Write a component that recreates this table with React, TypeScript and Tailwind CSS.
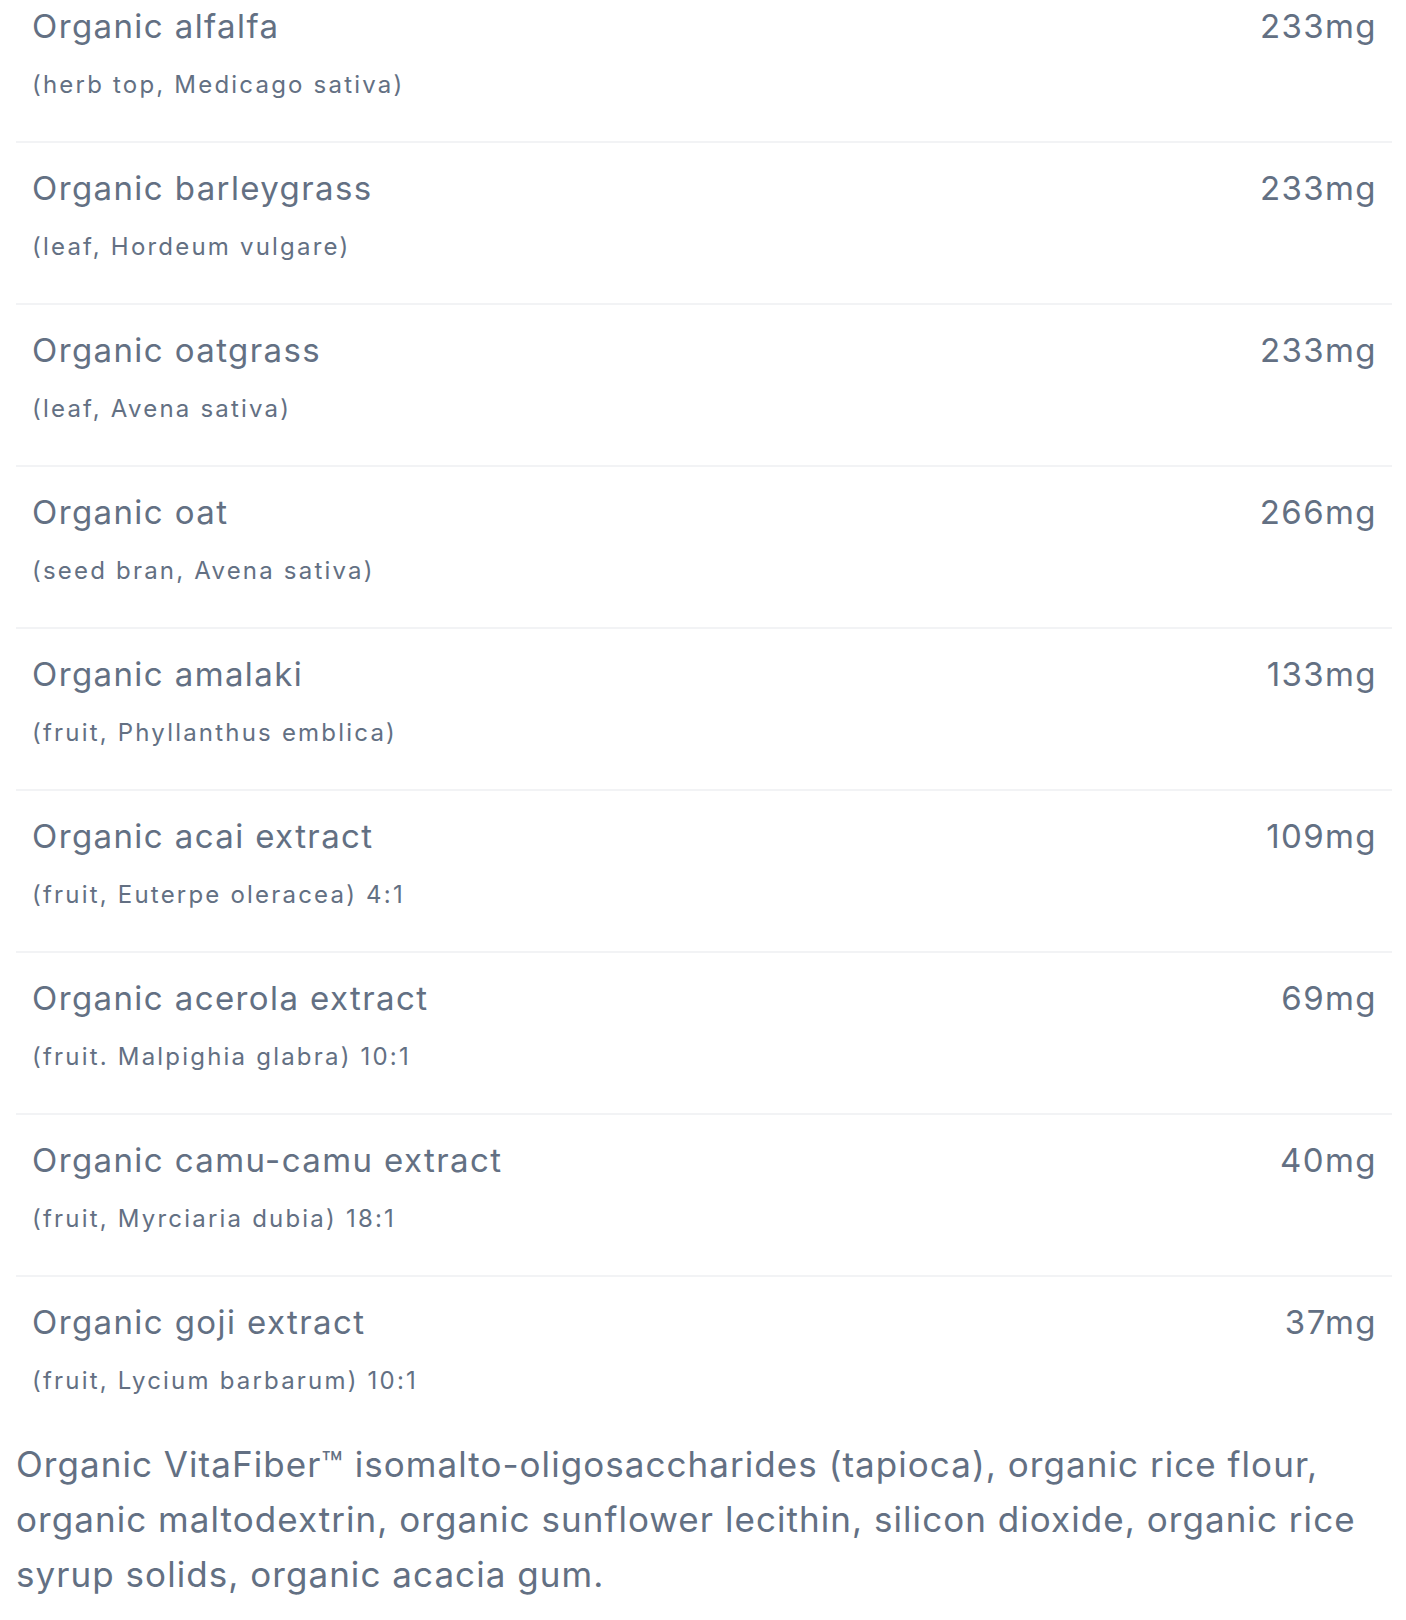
const INGREDIENTS = [
  { name: "Organic alfalfa", detail: "(herb top, Medicago sativa)", amount: "233mg" },
  { name: "Organic barleygrass", detail: "(leaf, Hordeum vulgare)", amount: "233mg" },
  { name: "Organic oatgrass", detail: "(leaf, Avena sativa)", amount: "233mg" },
  { name: "Organic oat", detail: "(seed bran, Avena sativa)", amount: "266mg" },
  { name: "Organic amalaki", detail: "(fruit, Phyllanthus emblica)", amount: "133mg" },
  { name: "Organic acai extract", detail: "(fruit, Euterpe oleracea) 4:1", amount: "109mg" },
  { name: "Organic acerola extract", detail: "(fruit. Malpighia glabra) 10:1", amount: "69mg" },
  { name: "Organic camu-camu extract", detail: "(fruit, Myrciaria dubia) 18:1", amount: "40mg" },
  { name: "Organic goji extract", detail: "(fruit, Lycium barbarum) 10:1", amount: "37mg" },
];

export default function App() {
  return (
    <div className="min-h-screen bg-white pl-4 pr-[14px] font-['Inter',sans-serif] text-[#637083]">
      <ul>
        {INGREDIENTS.map((item, i) => (
          <li
            key={item.name}
            className={
              "flex items-start justify-between px-4 pb-[38px] " +
              (i === 0 ? "pt-[4px] " : "pt-[23px] ") +
              (i < INGREDIENTS.length - 1 ? "border-b-2 border-[#f2f3f5]" : "")
            }
          >
            <div>
              <div className="text-[33px] leading-[44px] tracking-[1.4px]">{item.name}</div>
              <div className="mt-[19px] text-[24px] leading-[36px] tracking-[2.2px]">{item.detail}</div>
            </div>
            <div className="-mr-[1px] text-[33px] leading-[44px] tracking-[1.4px]">{item.amount}</div>
          </li>
        ))}
      </ul>
      <p className="text-[35px] leading-[55px] tracking-[1.05px]">
        Organic VitaFiber™ isomalto-oligosaccharides (tapioca), organic rice flour, organic
        maltodextrin, organic sunflower lecithin, silicon dioxide, organic rice syrup solids,
        organic acacia gum.
      </p>
    </div>
  );
}
